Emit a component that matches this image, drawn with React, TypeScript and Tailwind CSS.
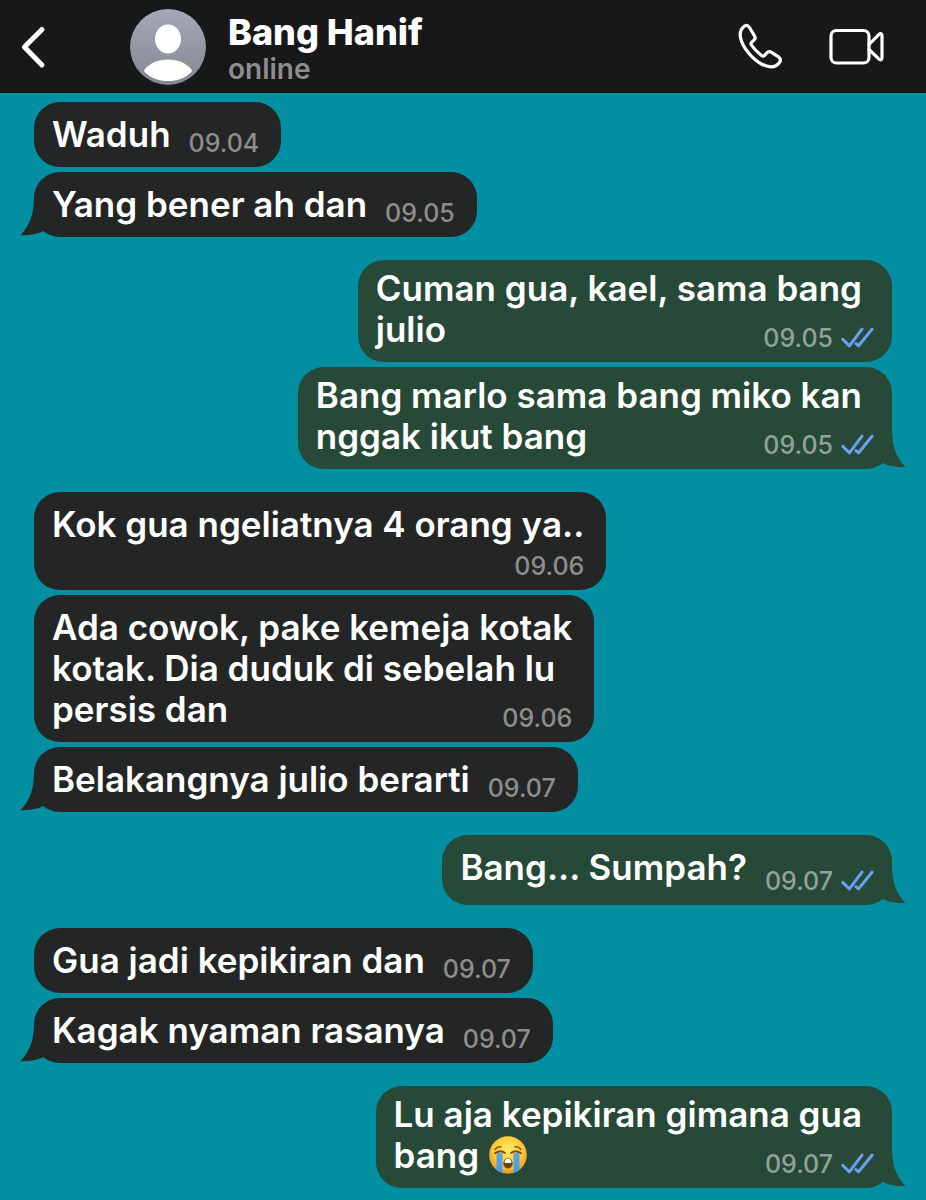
import React from "react";

type Message = {
  lines: string[];
  time: string;
  mine?: boolean;
  tail?: boolean;
  crying?: boolean;
  layout: "inline" | "overlay" | "below";
};

const groups: Message[][] = [
  [
    { lines: ["Waduh"], time: "09.04", layout: "inline" },
    { lines: ["Yang bener ah dan"], time: "09.05", tail: true, layout: "inline" },
  ],
  [
    { lines: ["Cuman gua, kael, sama bang", "julio"], time: "09.05", mine: true, layout: "overlay" },
    { lines: ["Bang marlo sama bang miko kan", "nggak ikut bang"], time: "09.05", mine: true, tail: true, layout: "overlay" },
  ],
  [
    { lines: ["Kok gua ngeliatnya 4 orang ya.."], time: "09.06", layout: "below" },
    { lines: ["Ada cowok, pake kemeja kotak", "kotak. Dia duduk di sebelah lu", "persis dan"], time: "09.06", layout: "overlay" },
    { lines: ["Belakangnya julio berarti"], time: "09.07", tail: true, layout: "inline" },
  ],
  [{ lines: ["Bang... Sumpah?"], time: "09.07", mine: true, tail: true, layout: "inline" }],
  [
    { lines: ["Gua jadi kepikiran dan"], time: "09.07", layout: "inline" },
    { lines: ["Kagak nyaman rasanya"], time: "09.07", tail: true, layout: "inline" },
  ],
  [
    { lines: ["Lu aja kepikiran gimana gua", "bang"], time: "09.07", mine: true, tail: true, crying: true, layout: "overlay" },
  ],
];

function Tail({ mine }: { mine?: boolean }) {
  return (
    <svg
      aria-hidden="true"
      viewBox="0 0 34 38"
      className={
        mine
          ? "absolute -right-3.5 bottom-0 h-[38px] w-[34px] -scale-x-100 fill-[#274937]"
          : "absolute -left-3.5 bottom-0 h-[38px] w-[34px] fill-[#242625]"
      }
    >
      <path d="M14 0C13.5 14 11 25 .5 36.3C9 36.5 17 35 23 32.2L34 20V0Z" />
    </svg>
  );
}

function Checks() {
  return (
    <svg aria-label="Read" role="img" viewBox="0 0 33 22" className="h-[22px] w-[33px] shrink-0" fill="none" stroke="#6ba0ee" strokeWidth="3" strokeLinecap="round" strokeLinejoin="round">
      <path d="M1.8 12.4L8.4 18.8L21 2.2" />
      <path d="M15 16.6L17.6 18.8L31 2.2" />
    </svg>
  );
}

function CryingFace() {
  return (
    <svg role="img" aria-label="Loudly crying face" viewBox="0 0 38 38" className="ml-2.5 inline-block size-[38px] align-[-6px]">
      <defs>
        <radialGradient id="face" cx="50%" cy="38%" r="62%">
          <stop offset="0" stopColor="#ffe96a" />
          <stop offset=".6" stopColor="#fccb3c" />
          <stop offset="1" stopColor="#ea9720" />
        </radialGradient>
        <linearGradient id="tear" x1="0" y1="0" x2="0" y2="1">
          <stop offset="0" stopColor="#5fa5dc" />
          <stop offset="1" stopColor="#3f9bed" />
        </linearGradient>
        <clipPath id="disc">
          <circle cx="19" cy="19" r="18.8" />
        </clipPath>
      </defs>
      <circle cx="19" cy="19" r="18.8" fill="url(#face)" />
      <g clipPath="url(#disc)" fill="url(#tear)">
        <path d="M7.5 17H13.5V38H7.5Z" />
        <path d="M24.5 17H30.5V38H24.5Z" />
      </g>
      <g fill="none" stroke="#805016" strokeLinecap="round">
        <path d="M6 13.5Q8 10.8 12 10.8" strokeWidth="1.4" />
        <path d="M32 13.5Q30 10.8 26 10.8" strokeWidth="1.4" />
        <path d="M6 17.2Q11.5 13.4 16 17" strokeWidth="1.9" />
        <path d="M32 17.2Q26.5 13.4 22 17" strokeWidth="1.9" />
      </g>
      <ellipse cx="19" cy="27.3" rx="4.7" ry="5.1" fill="#71400f" />
      <path d="M15.4 26.5Q16 22.8 19 22.8T22.6 26.5Q19 27.5 15.4 26.5Z" fill="#fff" />
    </svg>
  );
}

function bubblePadding(layout: Message["layout"], mine?: boolean) {
  if (layout === "below") return "pt-3 pb-[45px]";
  if (!mine) return "py-3";
  return layout === "inline" ? "pt-3 pb-[17px]" : "pt-2 pb-3";
}

function timePlacement(inline: boolean, mine?: boolean) {
  if (inline) return mine ? "relative -mb-1.5 self-end" : "relative -mb-px self-end";
  return mine ? "absolute right-[18px] bottom-[11px]" : "absolute right-[22px] bottom-[11px]";
}

function Bubble({ message }: { message: Message }) {
  const { lines, time, mine, tail, crying, layout } = message;
  const inline = layout === "inline";
  const side = mine ? "self-end bg-[#274937]" : "self-start bg-[#242625]";
  const end = mine ? (inline ? "pr-[18px]" : "pr-[30px]") : "pr-[22px]";
  return (
    <li className={`relative flex max-w-full rounded-[26px] pl-[18px] ${inline ? "gap-[18px]" : ""} ${bubblePadding(layout, mine)} ${side} ${end}`}>
      {tail && <Tail mine={mine} />}
      <p className="relative text-[35px] leading-[41px] font-semibold whitespace-nowrap text-white">
        {lines.map((line, i) => (
          <React.Fragment key={line}>
            {i > 0 && <br />}
            {line}
          </React.Fragment>
        ))}
        {crying && <CryingFace />}
      </p>
      <div
        className={`flex items-center gap-2 text-[25px] leading-[26px] font-medium ${mine ? "text-[#8fa398]" : "text-[#8d8d8f]"} ${timePlacement(inline, mine)}`}
      >
        <time>{time}</time>
        {mine && <Checks />}
      </div>
    </li>
  );
}

export default function App() {
  return (
    <div className="min-h-screen bg-[#018fa1] font-['Inter','Liberation_Sans',sans-serif]">
      <header className="flex h-[93px] items-center bg-[#181818] pr-[41px] pl-5 text-white">
        <button aria-label="Back" className="h-11 w-7">
          <svg viewBox="0 0 28 44" className="h-11 w-7" fill="none" stroke="currentColor" strokeWidth="5" strokeLinecap="round" strokeLinejoin="round">
            <path d="M22 4.5L4.4 22L22 40" />
          </svg>
        </button>
        <svg role="img" aria-label="Bang Hanif's profile picture" viewBox="0 0 76 76" className="ml-[82px] size-[76px] shrink-0">
          <defs>
            <linearGradient id="avatar" x1="0" y1="0" x2="0" y2="1">
              <stop offset="0" stopColor="#a5a9b8" />
              <stop offset="1" stopColor="#848793" />
            </linearGradient>
          </defs>
          <circle cx="38" cy="38" r="38" fill="url(#avatar)" />
          <ellipse cx="38" cy="30" rx="13" ry="14.6" fill="#fff" />
          <path d="M14.5 60.5C20 54 28 50.5 38 50.5S56 54 61.5 60.5Q62.5 62 61 63.4C54 69.5 47 72 38 72S22 69.5 15 63.4Q13.5 62 14.5 60.5Z" fill="#fff" />
        </svg>
        <div className="ml-[22px] grow pt-1.5">
          <h1 className="text-[36px] leading-[38px] font-extrabold whitespace-nowrap">Bang Hanif</h1>
          <p className="text-[28px] leading-[36px] font-semibold text-[#8d8d8f]">online</p>
        </div>
        <button aria-label="Voice call" className="size-12">
          <svg viewBox="0 0 48 48" className="size-12" fill="none" stroke="currentColor" strokeWidth="3.2" strokeLinejoin="round" strokeLinecap="round">
            <path d="M7.6 3C3.8 5.7 2.4 9.7 3.6 15.2C5.6 24.7 15.8 36.7 24.8 41.2C32.3 44.9 38.8 44.4 42.5 39.5C44 37.4 43.6 35.5 41.6 33.9L34.5 29.4C32.5 28.2 31 28.5 29.6 30.1L27.6 32.3C26.6 33.4 25.6 33.3 24.5 32.5C20.8 29.7 16.8 25.7 14.4 22C13.7 20.9 13.8 20 14.8 19.1L17 17.1C18.3 15.9 18.5 14.5 17.5 12.9L12.5 4.5C11.1 2.3 9.5 1.8 7.6 3Z" />
          </svg>
        </button>
        <button aria-label="Video call" className="ml-11 h-10 w-14">
          <svg viewBox="0 0 56 40" className="h-10 w-14" fill="none" stroke="currentColor" strokeWidth="3.2" strokeLinejoin="round" strokeLinecap="round">
            <rect x="2" y="3.5" width="38" height="32.5" rx="5.5" />
            <path d="M40 17.5L49.5 7.8Q53 5 53 9V30.5Q53 34.5 49.5 31.7L40 22.5" />
          </svg>
        </button>
      </header>
      <main className="flex flex-col gap-[23px] px-[34px] pt-[9px] pb-3">
        {groups.map((group, i) => (
          <ul key={i} className="flex flex-col gap-[5px]">
            {group.map((message) => (
              <Bubble key={message.lines[0]} message={message} />
            ))}
          </ul>
        ))}
      </main>
    </div>
  );
}
